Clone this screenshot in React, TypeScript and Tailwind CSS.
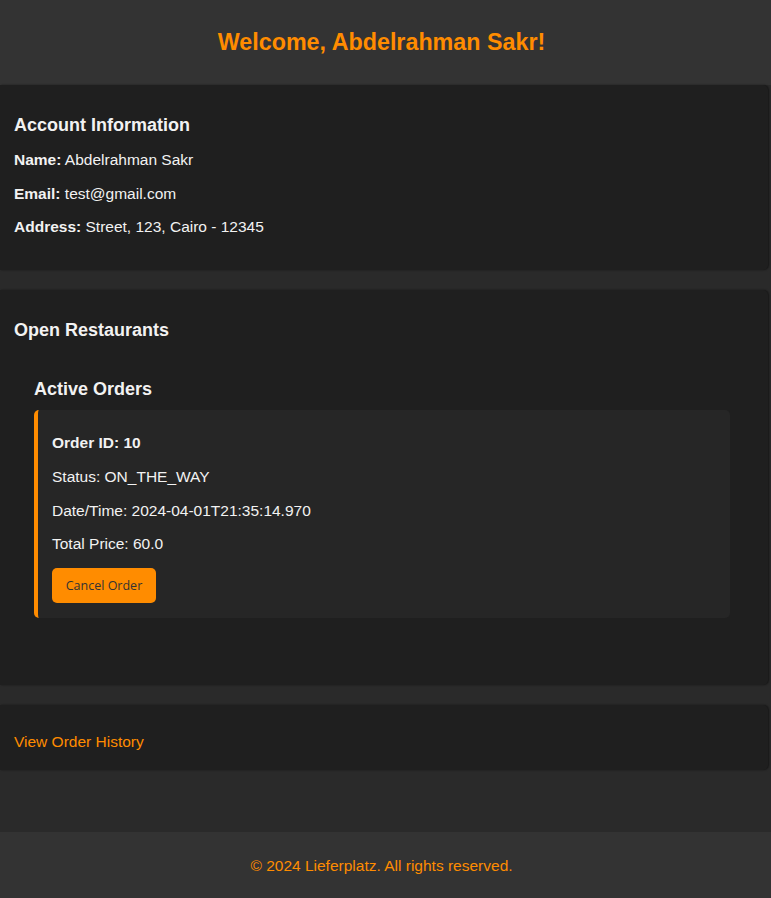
const font = { fontFamily: '"Liberation Sans", Arial, sans-serif' };

const Card = ({ children, className = '' }: { children: React.ReactNode; className?: string }) => (
  <section className={`bg-[#1f1f1f] rounded-r-[5px] w-[768px] px-[14px] shadow-[1px_0_2px_rgba(0,0,0,0.5)] ${className}`}>
    {children}
  </section>
);

export default function App() {
  return (
    <div className="min-h-[898px] bg-[#2a2a2a] text-[#f2f2f2] flex flex-col" style={font}>
      <header className="bg-[#333333] h-[85px] flex items-center justify-center pb-[1px]">
        <h1 className="text-[23.3px] font-bold text-[#ff8c00] leading-[28px] -ml-[8px]">
          Welcome, Abdelrahman Sakr!
        </h1>
      </header>

      <main className="flex flex-col gap-[20px]">
        <Card className="pt-[30px] pb-[34px]">
          <h3 className="text-[18px] font-bold leading-[21px]">Account Information</h3>
          <div className="mt-[15px] flex flex-col gap-[15.5px] text-[15.5px] leading-[18px]">
            <p><span className="font-bold">Name:</span> Abdelrahman Sakr</p>
            <p><span className="font-bold">Email:</span> test@gmail.com</p>
            <p><span className="font-bold">Address:</span> Street, 123, Cairo - 12345</p>
          </div>
        </Card>

        <Card className="pt-[30px] pb-[67px]">
          <h3 className="text-[18px] font-bold leading-[21px]">Open Restaurants</h3>
          <div className="pl-[20px] pr-[24px] mt-[38px]">
            <h3 className="text-[18px] font-bold leading-[21px]">Active Orders</h3>
            <div className="mt-[10px] bg-[#262626] border-l-4 border-[#ff8c00] rounded-[5px] pl-[14px] pt-[24px] pb-[15px] text-[15.5px] leading-[18px]">
              <p className="font-bold">Order ID: 10</p>
              <p className="mt-[16px]">Status: ON_THE_WAY</p>
              <p className="mt-[16px]">Date/Time: 2024-04-01T21:35:14.970</p>
              <p className="mt-[15px]">Total Price: 60.0</p>
              <button
                className="mt-[15px] w-[104px] h-[35px] bg-[#ff8c00] text-[#333333] rounded-[5px] text-[12.5px]"
                style={{ fontFamily: '"Open Sans", sans-serif' }}
              >
                Cancel Order
              </button>
            </div>
          </div>
        </Card>

        <Card className="pt-[28px] pb-[19px]">
          <a href="#" className="text-[#ff8c00] text-[15.5px] leading-[18px] block">View Order History</a>
        </Card>
      </main>

      <footer className="mt-auto bg-[#333333] h-[66px] flex items-center justify-center text-[#ff8c00] text-[15.5px] pt-[1px]">
        <p className="-ml-[8px]">© 2024 Lieferplatz. All rights reserved.</p>
      </footer>
    </div>
  );
}
